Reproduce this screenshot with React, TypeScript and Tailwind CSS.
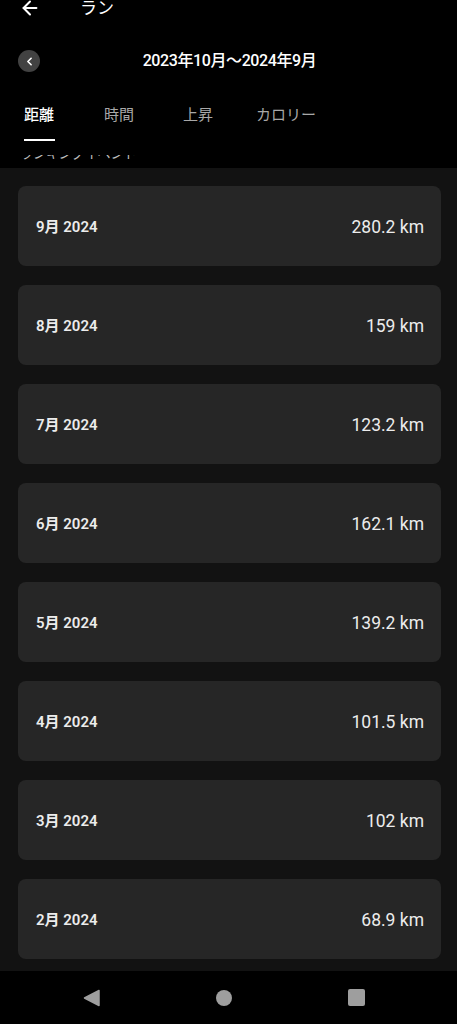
import { ArrowLeft, ChevronLeft } from "lucide-react";

const months = [
  { label: "9月 2024", value: "280.2 km" },
  { label: "8月 2024", value: "159 km" },
  { label: "7月 2024", value: "123.2 km" },
  { label: "6月 2024", value: "162.1 km" },
  { label: "5月 2024", value: "139.2 km" },
  { label: "4月 2024", value: "101.5 km" },
  { label: "3月 2024", value: "102 km" },
  { label: "2月 2024", value: "68.9 km" },
];

const tabs = [
  { name: "距離", active: true, w: "w-[80px]" },
  { name: "時間", active: false, w: "w-[79px]" },
  { name: "上昇", active: false, w: "w-[73px]" },
  { name: "カロリー", active: false, w: "w-auto" },
];

export default function App() {
  return (
    <main
      className="h-[1024px] w-[457px] overflow-hidden bg-black text-white flex flex-col"
      style={{ fontFamily: "Roboto, 'Noto Sans CJK JP', sans-serif" }}
    >
      {/* top bar, partly scrolled off */}
      <div className="h-[16px] shrink-0 flex items-end overflow-hidden">
        <div className="flex items-center -mb-[5px] h-[26px]">
          <ArrowLeft className="ml-[19px] w-[22px] h-[22px]" strokeWidth={2.2} />
          <span className="ml-[39px] text-[17px] leading-none">ラン</span>
        </div>
      </div>

      {/* period selector */}
      <div className="relative h-[90px] shrink-0 flex items-center justify-center">
        <button className="absolute left-[18px] top-[34px] w-[22px] h-[22px] rounded-full bg-[#424242] flex items-center justify-center">
          <ChevronLeft className="w-[13px] h-[13px]" strokeWidth={3} />
        </button>
        <span className="text-[16px] font-medium tracking-tight ml-[2px]">2023年10月〜2024年9月</span>
      </div>

      {/* tabs */}
      <div className="flex pl-[24px] -mt-[1px] shrink-0">
        {tabs.map((t) => (
          <div key={t.name} className={`${t.w} flex flex-col`}>
            <span
              className={`text-[15px] leading-[20px] ${t.active ? "text-white font-medium" : "text-[#a8a8a8]"}`}
            >
              {t.name}
            </span>
            {t.active && <div className="mt-[14px] h-[2px] w-[31px] bg-white" />}
          </div>
        ))}
      </div>

      {/* section title, scrolled under the tabs */}
      <div className="h-[27px] shrink-0 flex flex-col justify-end">
        <div className="h-[13px] overflow-hidden relative">
          <span className="absolute left-[20px] top-[-11px] text-[13px] leading-[20px] text-[#bdbdbd]">
            ランキングイベント
          </span>
        </div>
      </div>

      {/* month list */}
      <div className="flex-1 bg-[#121212] pl-[18px] pr-[16px] pt-[18px] flex flex-col gap-[19px] overflow-hidden">
        {months.map((m) => (
          <div
            key={m.label}
            className="h-[80px] shrink-0 rounded-[8px] bg-[#262626] flex items-center justify-between pl-[18px] pr-[17px] pt-[2px]"
          >
            <span className="text-[15px] font-semibold text-[#ececec]">{m.label}</span>
            <span className="text-[17.5px] text-[#ececec]">{m.value}</span>
          </div>
        ))}
      </div>

      {/* system nav bar */}
      <div className="h-[53px] shrink-0 bg-black flex items-center justify-between pl-[83px] pr-[92px]">
        <svg width="17" height="18" viewBox="0 0 17 18">
          <path d="M16 1.5 L1.5 9 L16 16.5 Z" fill="#9e9e9e" stroke="#9e9e9e" strokeWidth="1.5" strokeLinejoin="round" />
        </svg>
        <div className="w-[16px] h-[16px] rounded-full bg-[#9e9e9e]" />
        <div className="w-[17px] h-[17px] rounded-[2px] bg-[#9e9e9e]" />
      </div>
    </main>
  );
}
